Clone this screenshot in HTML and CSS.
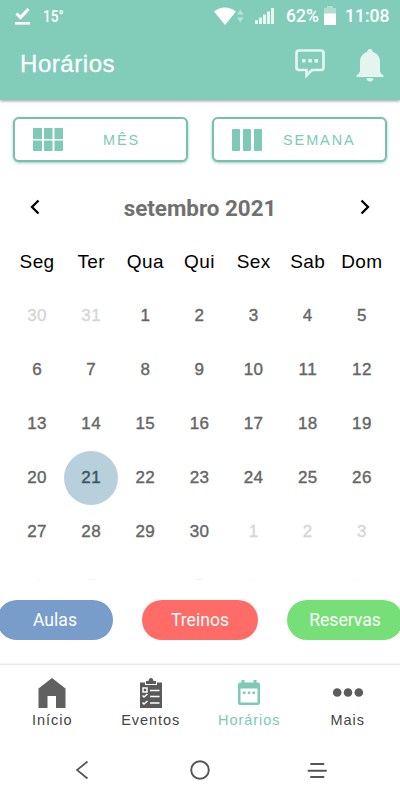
FILE: index.html
```
<!DOCTYPE html>
<html lang="pt">
<head>
    <meta charset="UTF-8">
    <meta name="viewport" content="width=device-width, initial-scale=1.0">
    <title>Horários</title>
    <link rel="stylesheet" href="styles.css">
</head>
<body>
    <header>
        <div class="status">
            <svg class="download" width="16" height="18" viewBox="0 0 16 18">
                <path d="M1.5 6.5l4 4 8-8.5" fill="none" stroke="#fff" stroke-width="3"/>
                <path d="M0 15h15v2.6H0z" fill="#fff"/>
            </svg>
            <span class="temp">15°</span>
            <svg class="wifi" width="30" height="18" viewBox="0 0 30 18">
                <path d="M0 4.5Q11 -3.5 22 4.5L11 18z" fill="#fff"/>
                <path d="M23 7.5l3.3-5 3.3 5zM23 10.5l3.3 5 3.3-5z" fill="#b9e2d6"/>
            </svg>
            <svg class="signal" width="19" height="16" viewBox="0 0 19 16">
                <path d="M0 12h3v4H0zM4 9.5h3V16H4zM8 6.5h3V16H8zM12 3.5h3V16h-3zM16 0h3v16h-3z" fill="#e6f6f1"/>
            </svg>
            <span class="percent">62%</span>
            <svg class="battery" width="12" height="19" viewBox="0 0 12 19">
                <path d="M0 2h3V0h6v2h3v6H0z" fill="#b0dfd1"/>
                <path d="M0 7.5h12V19H0z" fill="#fff"/>
            </svg>
            <span class="clock">11:08</span>
        </div>
        <div class="titlebar">
            <h1>Horários</h1>
            <svg class="chat" width="30" height="30" viewBox="0 0 30 30">
                <path d="M4 1.5h22q2.5 0 2.5 2.5v14.500q0 2.500-2.500 2.500H17L11.500 26.500V21H4q-2.500 0-2.500-2.500V4q0-2.500 2.500-2.500z" fill="none" stroke="#e4f5f0" stroke-width="2.700"/>
                <path d="M7 10h3.500v3.500H7zM13.300 10h3.500v3.500h-3.500zM19.500 10H23v3.500h-3.500z" fill="#e4f5f0"/>
            </svg>
            <svg class="bell" width="28" height="33" viewBox="0 0 28 33">
                <path d="M14 0c1.800 0 2.700 1.200 2.700 2.900C21.500 4.200 24 8 24 13v9c0 1.500 1 2.500 3.500 4.500V28H.5v-1.500C3 24.500 4 23.500 4 22v-9c0-5 2.500-8.800 7.300-10.100C11.300 1.200 12.200 0 14 0z" fill="#e4f5f0"/>
                <path d="M10.500 29.300h7q-.6 3.200-3.500 3.200t-3.500-3.200z" fill="#e4f5f0"/>
            </svg>
        </div>
    </header>

    <div class="views">
        <button class="month">
            <svg width="30" height="23" viewBox="0 0 30 23">
                <path d="M0 0h9v11H0zM11 0h8.500v11H11zM21.500 0H30v11h-8.500zM0 12.500h9V23H0zM11 12.500h8.500V23H11zM21.500 12.500H30V23h-8.500z" fill="#7ecab6"/>
            </svg>
            <span>MÊS</span>
        </button>
        <button class="week">
            <svg width="30" height="22" viewBox="0 0 30 22">
                <rect width="8" height="22" rx="1" fill="#7ecab6"/>
                <rect x="11" width="8" height="22" rx="1" fill="#7ecab6"/>
                <rect x="22" width="8" height="22" rx="1" fill="#7ecab6"/>
            </svg>
            <span>SEMANA</span>
        </button>
    </div>

    <div class="month_nav">
        <svg width="10" height="16" viewBox="0 0 10 16"><path d="M8.500 1.500L2 8l6.500 6.500" fill="none" stroke="#000" stroke-width="2.300"/></svg>
        <h2>setembro 2021</h2>
        <svg width="10" height="16" viewBox="0 0 10 16"><path d="M1.500 1.500L8 8l-6.500 6.500" fill="none" stroke="#000" stroke-width="2.300"/></svg>
    </div>

    <div class="calendar">
        <b>Seg</b><b>Ter</b><b>Qua</b><b>Qui</b><b>Sex</b><b>Sab</b><b>Dom</b>
        <i>30</i><i>31</i><span>1</span><span>2</span><span>3</span><span>4</span><span>5</span>
        <span>6</span><span>7</span><span>8</span><span>9</span><span>10</span><span>11</span><span>12</span>
        <span>13</span><span>14</span><span>15</span><span>16</span><span>17</span><span>18</span><span>19</span>
        <span>20</span><span class="today">21</span><span>22</span><span>23</span><span>24</span><span>25</span><span>26</span>
        <span>27</span><span>28</span><span>29</span><span>30</span><i>1</i><i>2</i><i>3</i>
        <i>4</i><i>5</i><i>6</i><i>7</i><i>8</i><i>9</i><i>10</i>
    </div>

    <div class="filters">
        <button class="aulas">Aulas</button>
        <button class="treinos">Treinos</button>
        <button class="reservas">Reservas</button>
    </div>

    <nav class="tabs">
        <a>
            <svg width="28" height="30" viewBox="0 0 28 30"><path d="M14 0l13.500 10.500V30H18V18h-8.500v12H.5V10.500z" fill="#606060"/></svg>
            Início
        </a>
        <a>
            <svg width="24" height="30" viewBox="0 0 24 30">
                <path d="M1 4.500h5V7h12V4.500h5V30H1z" fill="#5a5a5a"/>
                <path d="M7 6V3h2.500Q10 0 12 0t2.500 3H17v3z" fill="#5a5a5a"/>
                <path d="M4 10h4v4H4zM3.500 17.500L5 19l3.500-3M3.500 24.500L5 26l3.500-3M11 12.500h9.500M11 18.500h9.500M11 25h9.500" fill="none" stroke="#fff" stroke-width="1.500"/>
            </svg>
            Eventos
        </a>
        <a class="active">
            <svg width="24" height="30" viewBox="0 0 24 30">
                <path d="M3 4.500h1.500V2h3v2.500h9V2h3v2.500H21q2 0 2 2V25q0 2-2 2H3q-2 0-2-2V6.500q0-2 2-2zM3.500 10.500V24.500h17v-14z" fill="#7ecab6" fill-rule="evenodd"/>
                <path d="M6 13.500h2.500v2.500H6zM10.800 13.500h2.500v2.500h-2.500zM15.500 13.500H18v2.500h-2.500z" fill="#7ecab6"/>
            </svg>
            Horários
        </a>
        <a>
            <svg width="30" height="30" viewBox="0 0 30 30">
                <circle cx="4.200" cy="14.500" r="4.300" fill="#5c5c5c"/>
                <circle cx="15" cy="14.500" r="4.300" fill="#5c5c5c"/>
                <circle cx="25.800" cy="14.500" r="4.300" fill="#5c5c5c"/>
            </svg>
            Mais
        </a>
    </nav>

    <div class="system">
        <svg width="20" height="20" viewBox="0 0 20 20"><path d="M15.500 1.500L5 10l10.500 8.500" fill="none" stroke="#555" stroke-width="1.700"/></svg>
        <svg width="20" height="20" viewBox="0 0 20 20"><circle cx="10" cy="10" r="8.800" fill="none" stroke="#555" stroke-width="1.900"/></svg>
        <svg width="20" height="20" viewBox="0 0 20 20"><path d="M4 4h12.500M1.500 10.700h17.500M4 17h12.500" fill="none" stroke="#555" stroke-width="1.900" stroke-linecap="round"/></svg>
    </div>
</body>
</html>
```
FILE: styles.css
```
* {
    box-sizing: border-box;
}
body {
    margin: 0;
    width: 400px;
    height: 800px;
    overflow: hidden;
    background: #fff;
    font-family: "Liberation Sans", Arial, sans-serif;
}
svg {
    display: block;
    flex: none;
}
button {
    font-family: inherit;
    padding: 0;
    cursor: pointer;
}
header {
    height: 100px;
    background: #82cdba;
    color: #fff;
    box-shadow: 0 1px 3px rgba(0, 0, 0, 0.4);
}
.status {
    display: flex;
    align-items: center;
    height: 31px;
    padding-left: 15px;
    font: 500 17.5px Roboto, sans-serif;
}
.temp {
    width: 22px;
    margin-left: 12px;
    font-size: 17px;
    transform: scaleX(0.8);
    transform-origin: left;
}
.wifi {
    margin-left: 149px;
}
.signal {
    margin-left: 11px;
}
.percent {
    width: 33px;
    margin-left: 12px;
    font-size: 17.5px;
}
.battery {
    margin-left: 5px;
}
.clock {
    margin-left: 9px;
}
.titlebar {
    display: flex;
    align-items: center;
    height: 66px;
    padding: 0 16px 0 20px;
}
h1 {
    flex: 1;
    margin: 0;
    font-size: 24px;
    font-weight: normal;
    letter-spacing: 0.55px;
    -webkit-text-stroke: 0.3px #fff;
}
.bell {
    margin: 2px 0 0 31px;
}
.views {
    display: flex;
    justify-content: space-between;
    padding: 17px 13px 0;
}
.views button {
    display: flex;
    align-items: center;
    width: 175px;
    height: 45px;
    border: 2px solid #78bfad;
    border-radius: 6px;
    background: #fff;
    box-shadow: 0 1px 3px rgba(80, 170, 145, 0.6);
    color: #7ecab6;
    font-size: 14.5px;
    letter-spacing: 1.9px;
}
.month svg {
    margin-left: 18px;
}
.month span {
    margin-left: 40px;
}
.week svg {
    margin-left: 18px;
}
.week span {
    margin-left: 21px;
}
.month_nav {
    display: flex;
    align-items: center;
    justify-content: space-between;
    height: 72px;
    padding: 18px 30px 0;
}
h2 {
    margin: 2px 0 0;
    color: #707070;
    font: bold 22.4px Roboto, sans-serif;
}
.calendar {
    display: grid;
    grid-template-columns: repeat(7, 1fr);
    grid-auto-rows: 54px;
    height: 346px;
    padding: 1px 11px 0 10px;
    overflow: hidden;
    line-height: 54px;
    text-align: center;
}
.calendar b {
    font-size: 19px;
    font-weight: normal;
    letter-spacing: 0.4px;
}
.calendar span, .calendar i {
    color: #666;
    font-size: 17px;
    font-style: normal;
    letter-spacing: 0.4px;
    -webkit-text-stroke: 0.4px #666;
}
.calendar i {
    color: #d5d5d5;
    -webkit-text-stroke: 0.3px #d5d5d5;
}
/* last week is scrolled almost out of view */
.calendar i:nth-last-child(-n+7) {
    padding-top: 1px;
}
.calendar .today {
    border-radius: 50%;
    background: #b7d0dc;
    color: #42545e;
    -webkit-text-stroke-color: #42545e;
}
.filters {
    display: flex;
    justify-content: space-between;
    margin: 20px -3px 0;
}
.filters button {
    width: 116px;
    height: 40px;
    border: none;
    border-radius: 20px;
    color: #fff;
    font: 17.6px Roboto, sans-serif;
}
.aulas {
    background: #789dca;
}
.treinos {
    background: #ff6b66;
}
.reservas {
    background: #77df78;
}
.tabs {
    display: grid;
    grid-template-columns: repeat(4, 1fr);
    height: 76px;
    margin-top: 24px;
    padding: 13px 3px 0 3px;
    border-top: 1px solid #e8e8e8;
    box-shadow: 0 -1px 2px rgba(0, 0, 0, 0.05);
}
.tabs a {
    display: flex;
    flex-direction: column;
    align-items: center;
    gap: 4px;
    color: #444;
    font-size: 14.5px;
    letter-spacing: 0.95px;
}
.tabs .active {
    color: #7ecab6;
}
.system {
    display: flex;
    justify-content: space-between;
    padding: 20px 73px 0 72px;
}
```
